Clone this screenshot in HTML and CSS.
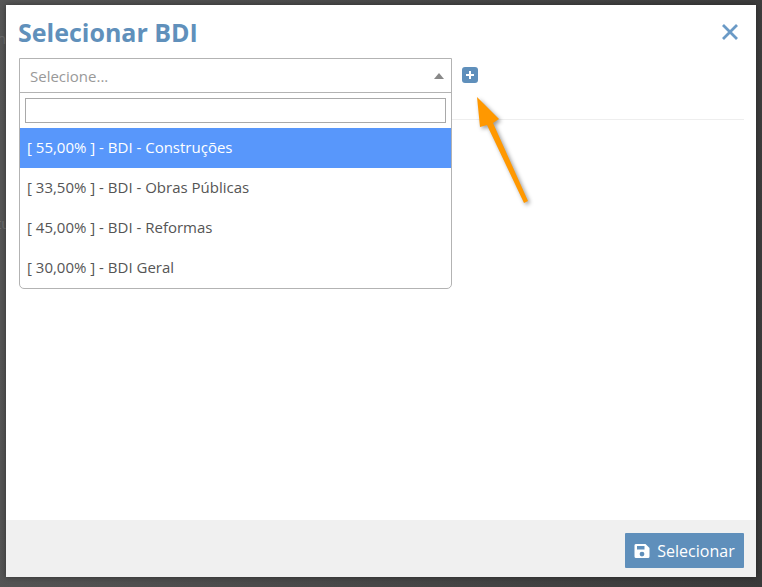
FILE: index.html
```html
<!DOCTYPE html>
<html lang="en">
<head>
  <meta charset="UTF-8" />
  <meta name="viewport" content="width=device-width, initial-scale=1" />
  <title>Selecionar BDI</title>
  <link rel="stylesheet" href="styles.css">
</head>
<body>

  <!-- Page text showing behind the backdrop -->
  <span class="behind behind-top">n</span>
  <span class="behind behind-low">tu</span>

  <div class="modal">
    <div class="modal-body">
      <div class="modal-head">
        <h2>Selecionar BDI</h2>
        <svg class="close" width="18" height="18" viewBox="0 0 18 18"><path d="M2 2 L16 16 M16 2 L2 16" /></svg>
      </div>

      <div class="select-row">
        <div class="select">
          <div class="select-current">
            <span>Selecione...</span>
            <i class="caret"></i>
          </div>
          <div class="select-drop">
            <div class="search-wrap"><input type="text" class="search" /></div>
            <ul class="options">
              <li class="active">[ 55,00% ] - BDI - Construções</li>
              <li>[ 33,50% ] - BDI - Obras Públicas</li>
              <li>[ 45,00% ] - BDI - Reformas</li>
              <li>[ 30,00% ] - BDI Geral</li>
            </ul>
          </div>
        </div>
        <span class="add-btn">
          <svg width="10" height="10" viewBox="0 0 10 10"><path d="M5 1 V9 M1 5 H9" /></svg>
        </span>
      </div>

      <hr class="divider" />

      <!-- Arrow drawn over the page -->
      <svg class="arrow" width="70" height="122" viewBox="0 0 70 122">
        <path d="M8 7 L30 29 L24 33 L59 111 L55 113 L18 35 L11 37 Z" />
      </svg>
    </div>

    <div class="modal-footer">
      <button>
        <svg width="16" height="16" viewBox="0 0 16 16"><path fill-rule="evenodd" d="M2.5 1 H11.5 L15.5 5 V13.5 A1.5 1.5 0 0 1 14 15 H2 A1.5 1.5 0 0 1 .5 13.5 V2.5 A1.5 1.5 0 0 1 2.5 1 Z M3 3 V6.5 H10.5 V3 Z M8 8.7 A2.4 2.4 0 1 0 8 13.5 A2.4 2.4 0 1 0 8 8.7 Z" /></svg>
        Selecionar
      </button>
    </div>
  </div>

</body>
</html>
```

FILE: styles.css
```css
html, body {
  height: 100%;
}
body {
  font-family: 'Open Sans', sans-serif;
  background: linear-gradient(100deg, #575757, #3a3a3a);
  color: #555;
  margin: 0;
  padding: 5px 6px 10px;
  box-sizing: border-box;
  overflow: hidden;
  position: relative;
}
.behind {
  position: absolute;
  font-size: 15px;
  line-height: 20px;
  color: #6e6e6e;
}
.behind-top {
  left: -3px;
  top: 28px;
}
.behind-low {
  left: -4px;
  top: 213px;
}
.modal {
  background: #fff;
  height: 572px;
  display: flex;
  flex-direction: column;
  position: relative;
  box-shadow: 0 0 6px rgba(0, 0, 0, 0.4);
}
.modal-body {
  flex: 1;
  position: relative;
  padding: 0 12px 0 13px;
}
.modal-head {
  display: flex;
  justify-content: space-between;
  align-items: center;
  height: 53px;
}
h2 {
  margin: 0 0 0 -1px;
  font-size: 25px;
  font-weight: 700;
  color: #6090bb;
}
.close {
  margin-right: 5px;
  fill: none;
  stroke: #6a9ac6;
  stroke-width: 2.8;
}
.select-row {
  display: flex;
  align-items: flex-start;
  gap: 10px;
  position: relative;
  z-index: 1;
}
.select {
  width: 433px;
  background: #fff;
  box-sizing: border-box;
  border: 1px solid #b3b3b3;
  border-radius: 0 0 5px 5px;
}
.select-current {
  height: 34px;
  box-sizing: border-box;
  border-bottom: 1px solid #b3b3b3;
  display: flex;
  align-items: center;
  justify-content: space-between;
  padding: 0 7px 0 10px;
  font-size: 15px;
  color: #999;
}
.caret {
  width: 0;
  height: 0;
  border-left: 5px solid transparent;
  border-right: 5px solid transparent;
  border-bottom: 6px solid #888;
}
.search-wrap {
  padding: 5px;
}
.search {
  display: block;
  width: 100%;
  height: 25px;
  box-sizing: border-box;
  border: 1px solid #a9a9a9;
  outline: none;
  padding: 0 4px;
}
.options {
  list-style: none;
  margin: 0;
  padding: 0;
}
.options li {
  height: 40px;
  line-height: 39px;
  padding: 0 7px;
  font-size: 15px;
  color: #555;
}
.options li.active {
  background: #5897fb;
  color: #fff;
}
.add-btn {
  width: 16px;
  height: 16px;
  margin-top: 9px;
  background: #5f8fbb;
  border-radius: 3px;
  display: flex;
  align-items: center;
  justify-content: center;
}
.add-btn svg {
  fill: none;
  stroke: #fff;
  stroke-width: 2;
}
.divider {
  position: absolute;
  top: 114px;
  left: 13px;
  right: 12px;
  margin: 0;
  border: none;
  border-top: 1px solid #eee;
}
.arrow {
  position: absolute;
  left: 463px;
  top: 85px;
  z-index: 2;
  fill: #ff9800;
  filter: drop-shadow(2px 2px 2px rgba(0, 0, 0, 0.4));
}
.modal-footer {
  height: 57px;
  background: #f0f0f0;
  box-sizing: border-box;
  padding: 13px 12px 0 0;
  display: flex;
  justify-content: flex-end;
  align-items: flex-start;
}
button {
  height: 35px;
  width: 119px;
  background: #5f8fbb;
  color: #fff;
  border: none;
  border-radius: 1px;
  font-family: inherit;
  font-size: 16px;
  display: flex;
  align-items: center;
  justify-content: center;
  gap: 7px;
  padding: 0;
}
button svg {
  fill: #fff;
}
```
